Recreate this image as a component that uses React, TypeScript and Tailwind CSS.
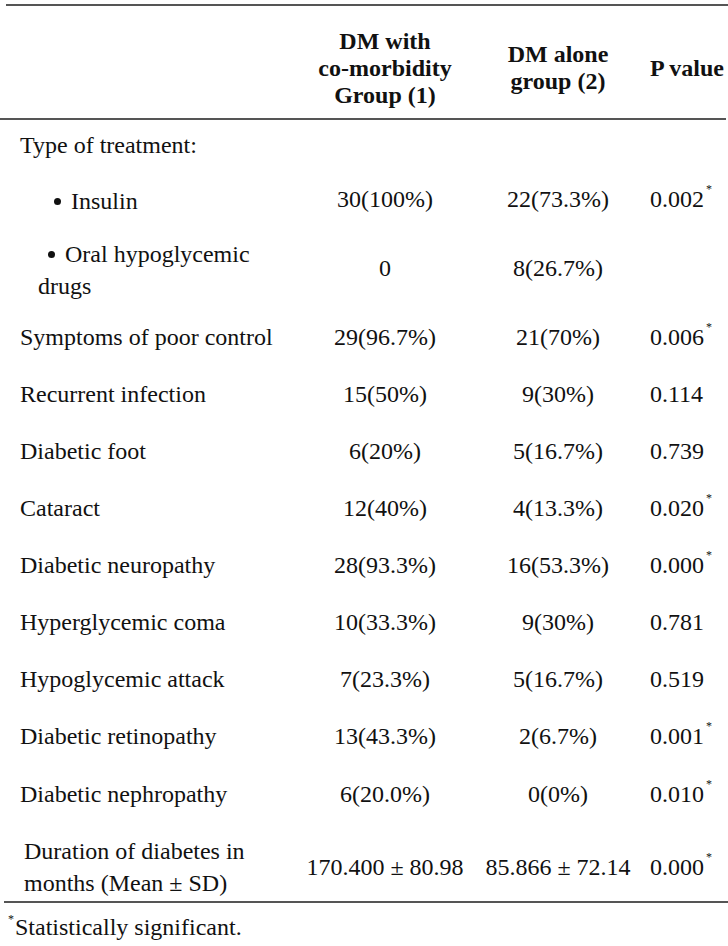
import React from 'react'

type Row = {
  label: React.ReactNode
  g1?: string
  g2?: string
  p?: string
  sig?: boolean
  h: string
  pad?: string
}

const Bullet = ({ children, gap }: { children: React.ReactNode; gap: string }) => (
  <span className="inline-flex items-center">
    <span className={`inline-block h-[7px] w-[7px] rounded-full bg-[#111] ${gap}`} />
    {children}
  </span>
)

const rows: Row[] = [
  { label: 'Type of treatment:', h: 'h-[50px]', pad: 'pl-[20px]' },
  {
    label: <Bullet gap="mr-[10px]">Insulin</Bullet>,
    g1: '30(100%)',
    g2: '22(73.3%)',
    p: '0.002',
    sig: true,
    h: 'h-[58px]',
    pad: 'pl-[54px]',
  },
  {
    label: (
      <>
        <span className="pl-[10px]">
          <Bullet gap="mr-[10px]">Oral hypoglycemic</Bullet>
        </span>
        <br />
        drugs
      </>
    ),
    g1: '0',
    g2: '8(26.7%)',
    h: 'h-[80px]',
    pad: 'pl-[38px]',
  },
  { label: 'Symptoms of poor control', g1: '29(96.7%)', g2: '21(70%)', p: '0.006', sig: true, h: 'h-[57px]' },
  { label: 'Recurrent infection', g1: '15(50%)', g2: '9(30%)', p: '0.114', h: 'h-[57px]' },
  { label: 'Diabetic foot', g1: '6(20%)', g2: '5(16.7%)', p: '0.739', h: 'h-[57px]' },
  { label: 'Cataract', g1: '12(40%)', g2: '4(13.3%)', p: '0.020', sig: true, h: 'h-[57px]' },
  { label: 'Diabetic neuropathy', g1: '28(93.3%)', g2: '16(53.3%)', p: '0.000', sig: true, h: 'h-[57px]' },
  { label: 'Hyperglycemic coma', g1: '10(33.3%)', g2: '9(30%)', p: '0.781', h: 'h-[57px]' },
  { label: 'Hypoglycemic attack', g1: '7(23.3%)', g2: '5(16.7%)', p: '0.519', h: 'h-[57px]' },
  { label: 'Diabetic retinopathy', g1: '13(43.3%)', g2: '2(6.7%)', p: '0.001', sig: true, h: 'h-[58px]' },
  { label: 'Diabetic nephropathy', g1: '6(20.0%)', g2: '0(0%)', p: '0.010', sig: true, h: 'h-[58px]' },
  {
    label: (
      <>
        Duration of diabetes in
        <br />
        months (Mean ± SD)
      </>
    ),
    g1: '170.400 ± 80.98',
    g2: '85.866 ± 72.14',
    p: '0.000',
    sig: true,
    h: 'h-[78px] pt-[10px]',
    pad: 'pl-[24px]',
  },
]

function PValue({ p, sig }: { p?: string; sig?: boolean }) {
  if (!p) return null
  return (
    <span className="relative">
      {p}
      {sig && <span className="absolute -right-[8px] top-[-3px] text-[12px] leading-[12px]">*</span>}
    </span>
  )
}

export default function App() {
  return (
    <div className="h-[946px] w-[728px] bg-white font-['Liberation_Serif',serif] text-[24px] leading-[32px] text-[#111]">
      <div className="pt-[4px]">
        <div className="ml-[6px] h-[2px] bg-[#555]" />
        <div className="flex h-[112px] items-center pt-[12px] font-bold leading-[27px]">
          <div className="w-[300px]" />
          <div className="w-[170px] text-center">
            DM with
            <br />
            co-morbidity
            <br />
            Group (1)
          </div>
          <div className="w-[176px] text-center">
            DM alone
            <br />
            group (2)
          </div>
          <div className="flex-1 text-center">P value</div>
        </div>
        <div className="mr-[2px] h-[2px] bg-[#555]" />

        {rows.map((r, i) => (
          <div key={i} className={`flex items-center ${r.h}`}>
            <div className={`w-[300px] ${r.pad ?? 'pl-[20px]'}`}>{r.label}</div>
            <div className="w-[170px] text-center">{r.g1}</div>
            <div className="w-[176px] text-center">{r.g2}</div>
            <div className="flex-1 pl-[4px]">
              <PValue p={r.p} sig={r.sig} />
            </div>
          </div>
        ))}

        <div className="ml-[4px] h-[2px] bg-[#555]" />
        <div className="flex items-start pl-[8px] pt-[8px]">
          <span className="pt-[2px] text-[12px] leading-[12px]">*</span>
          <span className="pl-[1px]">Statistically significant.</span>
        </div>
      </div>
    </div>
  )
}
